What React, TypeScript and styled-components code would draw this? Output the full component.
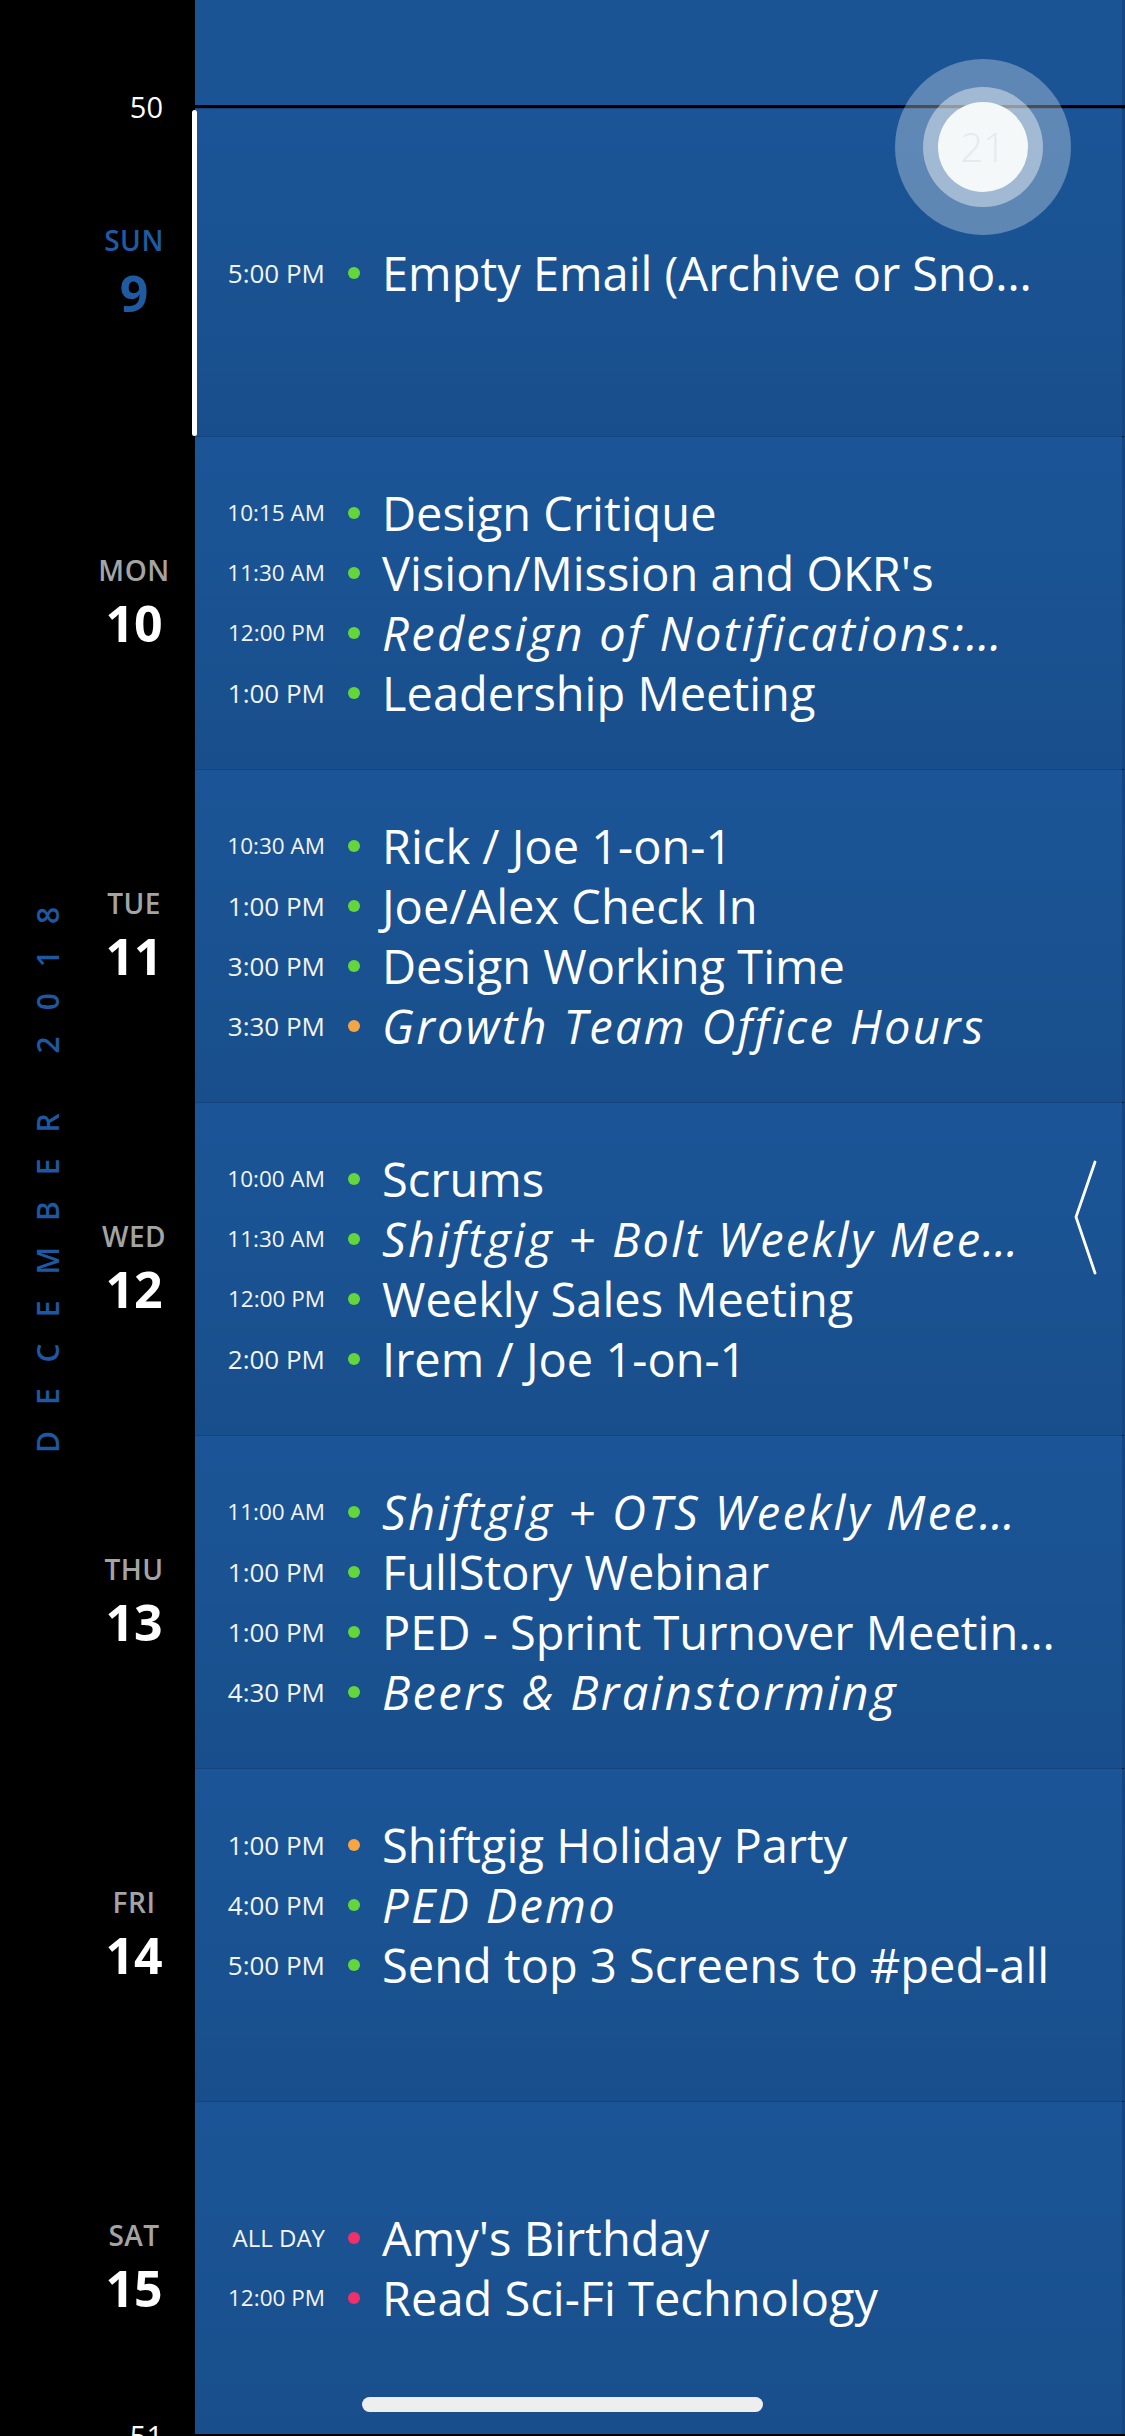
import React from "react";
import styled, { createGlobalStyle } from "styled-components";

const SIDEBAR = 195;

const GlobalStyle = createGlobalStyle`
  html, body {
    margin: 0;
    padding: 0;
    background: #000;
  }
  body {
    font-family: "Open Sans", "Liberation Sans", Arial, sans-serif;
    -webkit-font-smoothing: antialiased;
  }
  #root {
    width: 1125px;
    height: 2436px;
  }
`;

const Screen = styled.div`
  position: relative;
  width: 1125px;
  height: 2436px;
  overflow: hidden;
  background: #000;
  display: flex;
  flex-direction: column;
`;

const WeekTail = styled.div`
  display: grid;
  grid-template-columns: ${SIDEBAR}px 1fr;
  height: 105px;
  flex-shrink: 0;
`;

const SideBlank = styled.div`
  background: #000;
`;

const BlueFill = styled.div`
  background: #1a5495;
  border-right: 3px solid #15467f;
`;

const WeekDivider = styled.div`
  position: relative;
  z-index: 1;
  display: grid;
  grid-template-columns: ${SIDEBAR}px 1fr;
  height: 3px;
  flex-shrink: 0;
  background: #000;
`;

const WeekNumber = styled.div`
  height: 3px;
  display: flex;
  align-items: center;
  justify-content: flex-end;
  padding-right: 32px;
  color: #fff;
  font-size: 29px;
  font-weight: 400;
  line-height: 34px;
  white-space: nowrap;
`;

const DayRow = styled.section<{ $h: number }>`
  display: grid;
  grid-template-columns: ${SIDEBAR}px 1fr;
  height: ${(p) => p.$h}px;
  flex-shrink: 0;
`;

const DayLabel = styled.div`
  background: #000;
  display: flex;
  flex-direction: column;
  align-items: center;
  justify-content: center;
  padding-left: 73px;
  padding-top: 3px;
`;

const DayName = styled.div<{ $today?: boolean }>`
  font-size: 28px;
  font-weight: 600;
  line-height: 38px;
  letter-spacing: 0.5px;
  color: ${(p) => (p.$today ? "#1f5ba3" : "#a4a4a4")};
`;

const DayNumber = styled.div<{ $today?: boolean }>`
  font-size: 50px;
  font-weight: 700;
  line-height: 68px;
  color: ${(p) => (p.$today ? "#1f5ba3" : "#ffffff")};
`;

const DayContent = styled.div<{ $today?: boolean }>`
  position: relative;
  display: flex;
  flex-direction: column;
  justify-content: center;
  padding-left: 30px;
  background: linear-gradient(180deg, #1b5597 0%, #1a5291 55%, #184e8b 100%);
  border-right: 3px solid #15467f;
  border-top: 1px solid rgba(10, 40, 80, 0.25);
  box-sizing: border-box;

  ${(p) =>
    p.$today &&
    `
    &::before {
      content: "";
      position: absolute;
      left: -3px;
      top: 1px;
      bottom: 0;
      width: 5px;
      border-radius: 3px;
      background: #ffffff;
    }
  `}
`;

const EventList = styled.div<{ $padBottom?: number }>`
  display: flex;
  flex-direction: column;
  padding-bottom: ${(p) => p.$padBottom ?? 0}px;
`;

const EventRow = styled.div`
  display: flex;
  align-items: center;
  height: 60px;
`;

const EventTime = styled.div<{ $size: number }>`
  width: 100px;
  flex-shrink: 0;
  text-align: right;
  font-size: ${(p) => p.$size}px;
  font-weight: 500;
  color: #f2f4f7;
  white-space: nowrap;
  line-height: 60px;
`;

const Dot = styled.span<{ $color: string }>`
  width: 12px;
  height: 12px;
  border-radius: 50%;
  flex-shrink: 0;
  margin: 0 22px 0 23px;
  background: ${(p) => p.$color};
`;

const EventTitle = styled.div<{ $italic?: boolean }>`
  font-size: 47px;
  font-weight: 400;
  font-style: ${(p) => (p.$italic ? "italic" : "normal")};
  letter-spacing: ${(p) => (p.$italic ? "2.3px" : "0")};
  color: #ffffff;
  line-height: 60px;
  white-space: nowrap;
`;

const MonthLabel = styled.div`
  position: absolute;
  left: 48px;
  top: 1167px;
  transform: translate(-50%, -50%) rotate(180deg);
  writing-mode: vertical-rl;
  font-size: 30px;
  font-weight: 600;
  letter-spacing: 26px;
  color: #1d58a0;
  white-space: nowrap;
  line-height: 1;
`;

const Bubble = styled.div`
  position: absolute;
  left: 895px;
  top: 59px;
  width: 176px;
  height: 176px;
  border-radius: 50%;
  background: rgba(255, 255, 255, 0.3);
  display: flex;
  align-items: center;
  justify-content: center;
  z-index: 2;
`;

const BubbleRing = styled.div`
  width: 120px;
  height: 120px;
  border-radius: 50%;
  background: rgba(255, 255, 255, 0.42);
  display: flex;
  align-items: center;
  justify-content: center;
`;

const BubbleCore = styled.div`
  width: 90px;
  height: 90px;
  border-radius: 50%;
  background: #f4f8f9;
  display: flex;
  align-items: center;
  justify-content: center;
  color: #e3ebef;
  font-size: 40px;
  font-weight: 300;
  line-height: 1;
`;

const Chevron = styled.svg`
  position: absolute;
  left: 1072px;
  top: 1159px;
  z-index: 2;
`;

const HomeIndicator = styled.div`
  position: absolute;
  left: 362px;
  top: 2397px;
  width: 401px;
  height: 15px;
  border-radius: 8px;
  background: #eeeeee;
  z-index: 2;
`;

type Ev = { time: string; title: string; color: string; italic?: boolean };
type Day = {
  name: string;
  num: number;
  height: number;
  today?: boolean;
  padBottom?: number;
  events: Ev[];
};

const GREEN = "#63d63c";
const ORANGE = "#f6a544";
const PINK = "#f0306b";

const days: Day[] = [
  {
    name: "SUN",
    num: 9,
    height: 328,
    today: true,
    events: [{ time: "5:00 PM", title: "Empty Email (Archive or Sno\u2026", color: GREEN }],
  },
  {
    name: "MON",
    num: 10,
    height: 333,
    events: [
      { time: "10:15 AM", title: "Design Critique", color: GREEN },
      { time: "11:30 AM", title: "Vision/Mission and OKR's", color: GREEN },
      { time: "12:00 PM", title: "Redesign of Notifications:\u2026", color: GREEN, italic: true },
      { time: "1:00 PM", title: "Leadership Meeting", color: GREEN },
    ],
  },
  {
    name: "TUE",
    num: 11,
    height: 333,
    events: [
      { time: "10:30 AM", title: "Rick / Joe 1-on-1", color: GREEN },
      { time: "1:00 PM", title: "Joe/Alex Check In", color: GREEN },
      { time: "3:00 PM", title: "Design Working Time", color: GREEN },
      { time: "3:30 PM", title: "Growth Team Office Hours", color: ORANGE, italic: true },
    ],
  },
  {
    name: "WED",
    num: 12,
    height: 333,
    events: [
      { time: "10:00 AM", title: "Scrums", color: GREEN },
      { time: "11:30 AM", title: "Shiftgig + Bolt Weekly Mee\u2026", color: GREEN, italic: true },
      { time: "12:00 PM", title: "Weekly Sales Meeting", color: GREEN },
      { time: "2:00 PM", title: "Irem / Joe 1-on-1", color: GREEN },
    ],
  },
  {
    name: "THU",
    num: 13,
    height: 333,
    events: [
      { time: "11:00 AM", title: "Shiftgig + OTS Weekly Mee\u2026", color: GREEN, italic: true },
      { time: "1:00 PM", title: "FullStory Webinar", color: GREEN },
      { time: "1:00 PM", title: "PED - Sprint Turnover Meetin\u2026", color: GREEN },
      { time: "4:30 PM", title: "Beers & Brainstorming", color: GREEN, italic: true },
    ],
  },
  {
    name: "FRI",
    num: 14,
    height: 333,
    padBottom: 60,
    events: [
      { time: "1:00 PM", title: "Shiftgig Holiday Party", color: ORANGE },
      { time: "4:00 PM", title: "PED Demo", color: GREEN, italic: true },
      { time: "5:00 PM", title: "Send top 3 Screens to #ped-all", color: GREEN },
    ],
  },
  {
    name: "SAT",
    num: 15,
    height: 333,
    events: [
      { time: "ALL DAY", title: "Amy's Birthday", color: PINK },
      { time: "12:00 PM", title: "Read Sci-Fi Technology", color: PINK },
    ],
  },
];

function timeSize(t: string): number {
  if (t === "ALL DAY") return 24;
  return t.length >= 8 ? 22.5 : 26;
}

export default function App() {
  return (
    <>
      <GlobalStyle />
      <Screen>
        <WeekTail>
          <SideBlank />
          <BlueFill />
        </WeekTail>
        <WeekDivider>
          <WeekNumber>50</WeekNumber>
        </WeekDivider>

        {days.map((d) => (
          <DayRow key={d.name} $h={d.height}>
            <DayLabel>
              <DayName $today={d.today}>{d.name}</DayName>
              <DayNumber $today={d.today}>{d.num}</DayNumber>
            </DayLabel>
            <DayContent $today={d.today}>
              <EventList $padBottom={d.padBottom}>
                {d.events.map((e, i) => (
                  <EventRow key={i}>
                    <EventTime $size={timeSize(e.time)}>{e.time}</EventTime>
                    <Dot $color={e.color} />
                    <EventTitle $italic={e.italic}>{e.title}</EventTitle>
                  </EventRow>
                ))}
              </EventList>
            </DayContent>
          </DayRow>
        ))}

        <WeekDivider>
          <WeekNumber>51</WeekNumber>
        </WeekDivider>

        <MonthLabel>DECEMBER 2018</MonthLabel>

        <Bubble>
          <BubbleRing>
            <BubbleCore>21</BubbleCore>
          </BubbleRing>
        </Bubble>

        <Chevron width="28" height="118" viewBox="0 0 28 118">
          <polyline
            points="23,3 4,58 23,114"
            fill="none"
            stroke="#ffffff"
            strokeWidth="2.8"
            strokeLinecap="round"
            strokeLinejoin="miter"
          />
        </Chevron>

        <HomeIndicator />
      </Screen>
    </>
  );
}
